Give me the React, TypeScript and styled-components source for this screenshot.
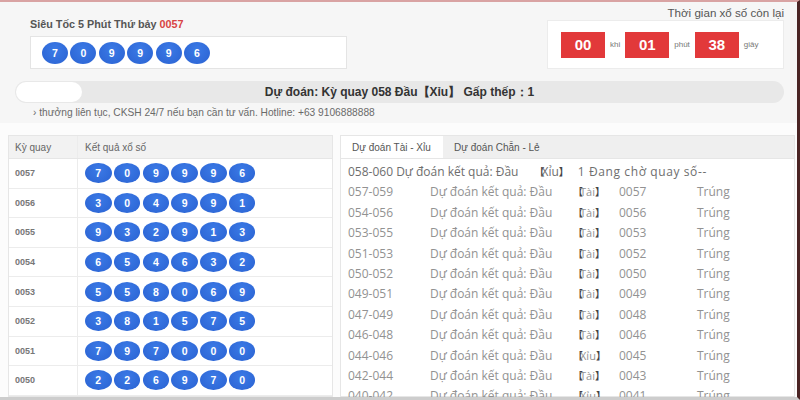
import React from 'react';
import styled, { createGlobalStyle } from 'styled-components';

const GlobalStyle = createGlobalStyle`
  html, body { margin: 0; padding: 0; background: #fafafa; }
  body { font-family: 'Liberation Sans', Arial, sans-serif; }
  * { box-sizing: border-box; }
`;

const current = { label: 'Siêu Tốc 5 Phút Thứ bảy', issue: '0057', balls: [7, 0, 9, 9, 9, 6] };

const history: [string, number[]][] = [
  ['0057', [7, 0, 9, 9, 9, 6]],
  ['0056', [3, 0, 4, 9, 9, 1]],
  ['0055', [9, 3, 2, 9, 1, 3]],
  ['0054', [6, 5, 4, 6, 3, 2]],
  ['0053', [5, 5, 8, 0, 6, 9]],
  ['0052', [3, 8, 1, 5, 7, 5]],
  ['0051', [7, 9, 7, 0, 0, 0]],
  ['0050', [2, 2, 6, 9, 7, 0]],
];

const predictions: [string, string, string][] = [
  ['057-059', 'Tài', '0057'],
  ['054-056', 'Tài', '0056'],
  ['053-055', 'Tài', '0053'],
  ['051-053', 'Tài', '0052'],
  ['050-052', 'Tài', '0050'],
  ['049-051', 'Tài', '0049'],
  ['047-049', 'Tài', '0048'],
  ['046-048', 'Tài', '0046'],
  ['044-046', 'Xỉu', '0045'],
  ['042-044', 'Tài', '0043'],
  ['040-042', 'Xỉu', '0041'],
];

const App: React.FC = () => (
  <>
    <GlobalStyle />
    <Page>
      <Top>
        <HeaderRow>
          <Draw>
            <DrawLabel>
              {current.label} <Issue>{current.issue}</Issue>
            </DrawLabel>
            <BallBox>
              {current.balls.map((b, i) => (
                <Ball key={i}>{b}</Ball>
              ))}
            </BallBox>
          </Draw>
          <Timer>
            <TimerTitle>Thời gian xổ số còn lại</TimerTitle>
            <TimerBox>
              <Digit>00</Digit>
              <Unit>khi</Unit>
              <Digit>01</Digit>
              <Unit>phút</Unit>
              <Digit>38</Digit>
              <Unit>giây</Unit>
            </TimerBox>
          </Timer>
        </HeaderRow>
        <Progress>
          <Knob />
          <ProgressText>Dự đoán: Kỳ quay 058 Đầu【Xỉu】 Gấp thếp：1</ProgressText>
        </Progress>
        <Marquee>› thưởng liên tục, CKSH 24/7 nếu bạn cần tư vấn. Hotline: +63 9106888888</Marquee>
      </Top>
      <Bottom>
        <Table>
          <HeadRow>
            <IssueCell>Kỳ quay</IssueCell>
            <ResultCell>Kết quả xổ số</ResultCell>
          </HeadRow>
          {history.map(([issue, balls]) => (
            <Row key={issue}>
              <IssueCell>{issue}</IssueCell>
              <ResultCell>
                {balls.map((b, i) => (
                  <Ball key={i} small>
                    {b}
                  </Ball>
                ))}
              </ResultCell>
            </Row>
          ))}
        </Table>
        <Panel>
          <Tabs>
            <Tab active>Dự đoán Tài - Xỉu</Tab>
            <Tab>Dự đoán Chẵn - Lẻ</Tab>
          </Tabs>
          <List>
            <Line>
              058-060 Dự đoán kết quả: Đầu
              <Pending>
                <Br>【</Br>Xỉu<Br>】</Br>
              </Pending>
              <Wide>1 Đang chờ quay số--</Wide>
            </Line>
            {predictions.map(([range, pick, code]) => (
              <PredRow key={range}>
                <span>{range}</span>
                <span>Dự đoán kết quả: Đầu</span>
                <Pick>
                  <Br>【</Br>
                  {pick}
                  <Br>】</Br>
                </Pick>
                <span>{code}</span>
                <span>Trúng</span>
              </PredRow>
            ))}
          </List>
        </Panel>
      </Bottom>
    </Page>
  </>
);

export default App;

const Page = styled.div`
  width: 800px;
  height: 400px;
  overflow: hidden;
  border-top: 2px solid #d9a3a3;
  border-right: 3px solid #4a2424;
  border-bottom: 3px solid #cdcdcd;
  background: #fcfcfc;
  display: flex;
  flex-direction: column;
`;

const Top = styled.div`
  background: #f6f6f6;
  padding: 4px 13px 4px 15px;
  height: 121px;
  flex-shrink: 0;
`;

const HeaderRow = styled.div`
  display: flex;
  justify-content: space-between;
  align-items: flex-end;
`;

const Draw = styled.div`
  margin-left: 15px;
`;

const DrawLabel = styled.div`
  font-size: 10.8px;
  font-weight: bold;
  color: #555;
  line-height: 13px;
  margin-bottom: 5px;
`;

const Issue = styled.span`
  color: #d94444;
`;

const BallBox = styled.div`
  width: 317px;
  height: 33px;
  background: #fff;
  border: 1px solid #e4e4e4;
  display: flex;
  align-items: center;
  gap: 2.4px;
  padding-left: 11px;
`;

const Ball = styled.span<{ small?: boolean }>`
  width: ${(p) => (p.small ? 26.5 : 26)}px;
  height: ${(p) => (p.small ? 20 : 22)}px;
  border-radius: 50%;
  background: radial-gradient(ellipse at 50% 35%, #3b7ae6, #2a62d2);
  color: #fff;
  font-weight: bold;
  font-size: 10.5px;
  display: flex;
  align-items: center;
  justify-content: center;
  flex-shrink: 0;
`;

const Timer = styled.div`
  display: flex;
  flex-direction: column;
  align-items: flex-end;
`;

const TimerTitle = styled.div`
  font-size: 11.6px;
  color: #555;
  line-height: 13px;
  margin-bottom: 1px;
`;

const TimerBox = styled.div`
  width: 237px;
  height: 49px;
  background: #fff;
  border: 1px solid #ececec;
  display: flex;
  align-items: center;
  gap: 5px;
  padding-left: 13px;
`;

const Digit = styled.span`
  width: 44px;
  height: 26px;
  background: #e2393a;
  color: #fff;
  font-weight: bold;
  font-size: 15px;
  display: flex;
  align-items: center;
  justify-content: center;
`;

const Unit = styled.span`
  font-size: 8px;
  color: #777;
`;

const Progress = styled.div`
  margin-top: 12px;
  width: 769px;
  height: 22px;
  border-radius: 11px;
  background: #e8e8e8;
  position: relative;
  display: flex;
  align-items: center;
  justify-content: center;
`;

// filled part of the bar sits over the track
const Knob = styled.div`
  position: absolute;
  left: 1px;
  top: 1px;
  width: 66px;
  height: 20px;
  border-radius: 10px;
  background: #fff;
`;

const ProgressText = styled.span`
  font-size: 12px;
  font-weight: bold;
  color: #333;
`;

const Marquee = styled.div`
  margin: 4px 0 0 18px;
  font-size: 10.2px;
  line-height: 12px;
  color: #6a6a6a;
`;

const Bottom = styled.div`
  flex: 1;
  display: flex;
  gap: 7px;
  padding: 12px 0 0 8px;
  min-height: 0;
`;

const Table = styled.div`
  width: 325px;
  border: 1px solid #e6e6e6;
  background: #fff;
  align-self: flex-start;
`;

const HeadRow = styled.div`
  display: flex;
  height: 23px;
  background: #f2f2f2;
  font-size: 10px;
  color: #666;
  border-bottom: 1px solid #e6e6e6;
`;

const Row = styled.div`
  display: flex;
  height: 29.6px;
  border-bottom: 1px solid #ececec;
  font-size: 9px;
  font-weight: bold;
  color: #777;
`;

const IssueCell = styled.div`
  width: 69px;
  padding-left: 6px;
  display: flex;
  align-items: center;
  border-right: 1px solid #ececec;
`;

const ResultCell = styled.div`
  flex: 1;
  padding-left: 7px;
  display: flex;
  align-items: center;
  gap: 2.3px;
`;

const Panel = styled.div`
  flex: 1;
  border: 1px solid #e6e6e6;
  background: #fff;
  margin-right: 2px;
`;

const Tabs = styled.div`
  display: flex;
  height: 23px;
  background: #efefef;
  border-bottom: 1px solid #e6e6e6;
`;

const Tab = styled.div<{ active?: boolean }>`
  padding: 0 11px;
  width: ${(p) => (p.active ? '102px' : 'auto')};
  display: flex;
  align-items: center;
  font-size: 10px;
  color: #555;
  white-space: nowrap;
  background: ${(p) => (p.active ? '#fff' : 'transparent')};
`;

const List = styled.div`
  padding: 3px 0 0 7px;
  font-family: 'Open Sans', sans-serif;
  font-size: 12px;
  color: #929292;
`;

const Line = styled.div`
  line-height: 20.4px;
  white-space: nowrap;
  color: #6e6e6e;
  display: flex;
`;

const Pending = styled.span`
  margin: 0 12px 0 16px;
`;

const Wide = styled.span`
  letter-spacing: 0.6px;
`;

const PredRow = styled.div`
  display: grid;
  grid-template-columns: 82px 143px 46px 78px auto;
  line-height: 20.4px;
  white-space: nowrap;
`;

const Pick = styled.span`
  font-size: 11px;
`;

const Br = styled.span`
  font-family: 'Noto Sans CJK SC', sans-serif;
  font-size: 10px;
  font-weight: bold;
  color: #444;
  letter-spacing: -3px;
`;
